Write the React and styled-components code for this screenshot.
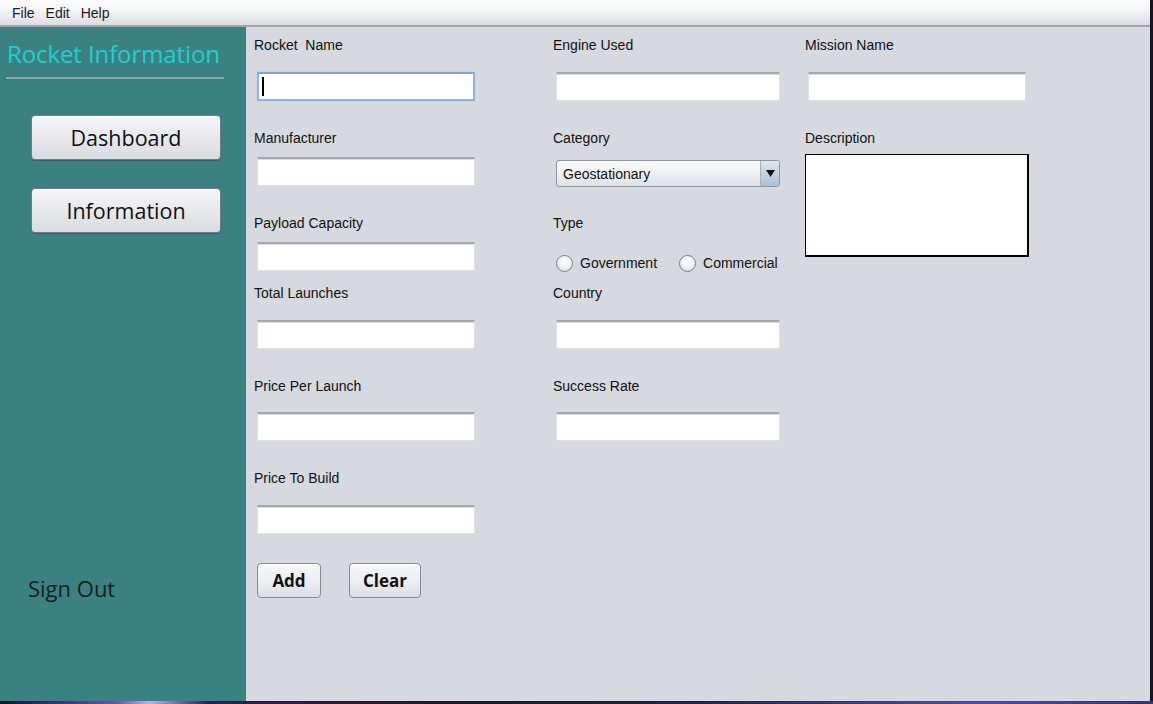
import React from 'react';
import styled, { createGlobalStyle } from 'styled-components';

const GlobalStyle = createGlobalStyle`
  html, body {
    margin: 0;
    padding: 0;
    background: #1b1222;
  }
  body {
    font-family: "Liberation Sans", Arial, sans-serif;
  }
`;

const App = () => {
  return (
    <>
      <GlobalStyle />
      <Desktop>
        <Window>
          <MenuBar>
            <MenuItem>File</MenuItem>
            <MenuItem>Edit</MenuItem>
            <MenuItem>Help</MenuItem>
          </MenuBar>
          <Body>
            <Sidebar>
              <Title>Rocket Information</Title>
              <Rule />
              <NavButton>Dashboard</NavButton>
              <NavButton $top={28}>Information</NavButton>
              <SignOut>Sign Out</SignOut>
            </Sidebar>

            <FormPanel>
              {/* row 1 */}
              <Cell>
                <Label>Rocket  Name</Label>
                <TextField $top={19} $focused>
                  <Caret />
                </TextField>
              </Cell>
              <Cell>
                <Label>Engine Used</Label>
                <TextField $top={19} $w={224} />
              </Cell>
              <Cell>
                <Label>Mission Name</Label>
                <TextField $top={19} />
              </Cell>

              {/* row 2 */}
              <Cell>
                <Label>Manufacturer</Label>
                <TextField $top={11} />
              </Cell>
              <Cell>
                <Label>Category</Label>
                <Combo>
                  <ComboText>Geostationary</ComboText>
                  <ComboArrow>
                    <svg width="9" height="7" viewBox="0 0 9 7">
                      <path d="M0 0 H9 L4.5 7 Z" fill="#111" />
                    </svg>
                  </ComboArrow>
                </Combo>
              </Cell>
              <Cell $span={2}>
                <Label>Description</Label>
                <TextArea />
              </Cell>

              {/* row 3 */}
              <Cell>
                <Label>Payload Capacity</Label>
                <TextField $top={11} />
              </Cell>
              <Cell>
                <Label>Type</Label>
                <RadioRow>
                  <RadioItem>
                    <Radio />
                    Government
                  </RadioItem>
                  <RadioItem>
                    <Radio />
                    Commercial
                  </RadioItem>
                </RadioRow>
              </Cell>

              {/* row 4 */}
              <Cell>
                <Label>Total Launches</Label>
                <TextField $top={19} />
              </Cell>
              <Cell>
                <Label>Country</Label>
                <TextField $top={19} $w={224} />
              </Cell>
              <Cell />

              {/* row 5 */}
              <Cell>
                <Label>Price Per Launch</Label>
                <TextField $top={18} />
              </Cell>
              <Cell>
                <Label>Success Rate</Label>
                <TextField $top={18} $w={224} />
              </Cell>
              <Cell />

              {/* row 6 */}
              <Cell>
                <Label>Price To Build</Label>
                <TextField $top={19} />
              </Cell>
              <Cell />
              <Cell />

              {/* buttons */}
              <ButtonRow>
                <ActionButton $w={64}>Add</ActionButton>
                <ActionButton $w={72}>Clear</ActionButton>
              </ButtonRow>
            </FormPanel>
          </Body>
        </Window>
      </Desktop>
    </>
  );
};

export default App;

// 바탕화면 (오른쪽은 어둡고 아래엔 보라색 띠)
const Desktop = styled.div`
  width: 1153px;
  height: 704px;
  overflow: hidden;
  background:
    linear-gradient(90deg, #1a0f33 0%, #7a48b8 10%, #c9a8e8 13%, #3a1a50 18%, #241a22 40%, #2a2040 60%, #5a44b0 85%, #3b2c80 100%) bottom / 100% 3px no-repeat,
    #1b1222;
`;

const Window = styled.div`
  width: 1150px;
  height: 701px;
  display: flex;
  flex-direction: column;
  background: #d6d9e0;
`;

const MenuBar = styled.div`
  height: 25px;
  display: flex;
  align-items: center;
  padding-left: 12px;
  gap: 11px;
  background: linear-gradient(#fbfdfd 0%, #f4f5f6 40%, #dcdde2 100%);
  border-bottom: 2px solid #a1a4ad;
  box-sizing: content-box;
`;

const MenuItem = styled.span`
  font-family: "Liberation Sans", Arial, sans-serif;
  font-size: 14px;
  color: #1b1b1b;
  margin-top: 1px;
`;

const Body = styled.div`
  flex: 1;
  display: flex;
  min-height: 0;
`;

const Sidebar = styled.div`
  width: 246px;
  flex-shrink: 0;
  background: #3c8182;
  display: flex;
  flex-direction: column;
  padding: 10px 0 98px 0;
  box-sizing: border-box;
`;

const Title = styled.div`
  font-family: "Open Sans", "Noto Sans", sans-serif;
  font-size: 24px;
  line-height: 34px;
  color: #1fcfcf;
  padding-left: 7px;
  letter-spacing: -0.1px;
`;

const Rule = styled.div`
  height: 2px;
  width: 218px;
  margin: 6px 0 0 6px;
  background: #8ea7a7;
`;

const NavButton = styled.button`
  width: 190px;
  height: 45px;
  margin: ${(props) => props.$top || 36}px 0 0 31px;
  border: 1px solid #757b85;
  border-radius: 4px;
  background: linear-gradient(#f6f6f9 0%, #e9eaee 45%, #d9dbe1 100%);
  box-shadow: inset 0 1px 0 #ffffff, 0 1px 1px rgba(0, 0, 0, 0.2);
  font-family: "Open Sans", "Noto Sans", sans-serif;
  font-size: 21.5px;
  color: #111;
  padding: 0;
  cursor: pointer;
`;

const SignOut = styled.div`
  margin-top: auto;
  padding-left: 28px;
  font-family: "Open Sans", "Noto Sans", sans-serif;
  font-size: 22px;
  line-height: 30px;
  color: #13201f;
`;

// 입력 폼 영역
const FormPanel = styled.div`
  flex: 1;
  display: grid;
  grid-template-columns: 299px 252px 1fr;
  grid-template-rows: 93px 85px 70px 93px 92px 93px auto;
  padding: 10px 0 0 8px;
`;

const Cell = styled.div`
  display: flex;
  flex-direction: column;
  align-items: flex-start;
  grid-row: ${(props) => (props.$span ? `span ${props.$span}` : 'auto')};
`;

const Label = styled.div`
  font-family: "Liberation Sans", Arial, sans-serif;
  font-size: 14px;
  line-height: 16px;
  color: #111;
  white-space: pre;
`;

const TextField = styled.div`
  position: relative;
  width: ${(props) => props.$w || 218}px;
  height: 29px;
  margin: ${(props) => props.$top}px 0 0 3px;
  box-sizing: border-box;
  background: #fff;
  border: ${(props) => (props.$focused ? '2px solid #8fb3db' : '1px solid #dfe0e3')};
  border-top: ${(props) => (props.$focused ? '2px solid #7fa6d4' : '2px solid #a5a8ad')};
  box-shadow: ${(props) => (props.$focused ? '0 0 0 1px #c4d6ea' : 'inset 0 1px 0 #dcdde0')};
`;

const Caret = styled.span`
  position: absolute;
  left: 3px;
  top: 3px;
  width: 2px;
  height: 19px;
  background: #000;
`;

const Combo = styled.div`
  width: 224px;
  height: 27px;
  margin: 14px 0 0 3px;
  box-sizing: border-box;
  display: flex;
  align-items: center;
  border: 1px solid #8f959e;
  border-radius: 3px;
  background: linear-gradient(#fbfbfc 0%, #eef0f3 50%, #dde1e7 100%);
  overflow: hidden;
`;

const ComboText = styled.span`
  flex: 1;
  padding-left: 6px;
  font-family: "Liberation Sans", Arial, sans-serif;
  font-size: 14px;
  color: #111;
`;

const ComboArrow = styled.span`
  width: 18px;
  height: 100%;
  display: flex;
  align-items: center;
  justify-content: center;
  border-left: 1px solid #a9b3c0;
  background: linear-gradient(#dfe7f0 0%, #c6d3e2 50%, #aebfd3 100%);
`;

const TextArea = styled.div`
  width: 224px;
  height: 103px;
  margin-top: 8px;
  box-sizing: border-box;
  background: #fff;
  border: 1px solid #000;
  border-bottom-width: 2px;
  border-right-width: 2px;
`;

const RadioRow = styled.div`
  display: flex;
  gap: 22px;
  margin: 24px 0 0 3px;
`;

const RadioItem = styled.label`
  display: flex;
  align-items: center;
  gap: 7px;
  font-family: "Liberation Sans", Arial, sans-serif;
  font-size: 14px;
  line-height: 17px;
  color: #111;
`;

const Radio = styled.span`
  width: 15px;
  height: 15px;
  border-radius: 50%;
  border: 1px solid #7a7f87;
  background: radial-gradient(circle at 50% 35%, #ffffff 0%, #eceef1 55%, #cfd3d9 100%);
`;

const ButtonRow = styled.div`
  grid-column: 1 / -1;
  display: flex;
  gap: 28px;
  padding-left: 3px;
  align-items: flex-start;
`;

const ActionButton = styled.button`
  width: ${(props) => props.$w}px;
  height: 35px;
  padding: 0;
  border: 1px solid #868a91;
  border-radius: 4px;
  background: linear-gradient(#f8f8fa 0%, #eceef1 50%, #dcdee4 100%);
  box-shadow: inset 0 1px 0 #fff;
  font-family: "Open Sans", "Noto Sans", sans-serif;
  font-weight: 700;
  font-size: 17px;
  color: #111;
  cursor: pointer;
`;
